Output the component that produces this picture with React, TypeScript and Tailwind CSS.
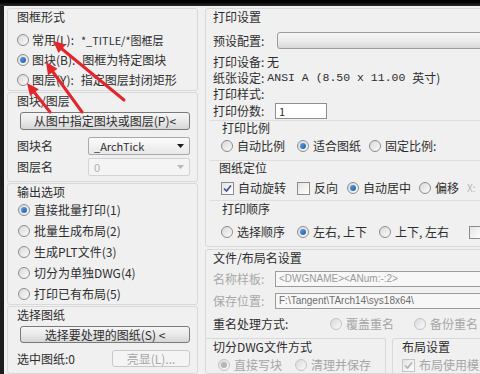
import React from 'react';

function Radio({ checked = false, disabled = false }: { checked?: boolean; disabled?: boolean }) {
  return (
    <span
      className={`w-[12px] h-[12px] shrink-0 rounded-full border flex items-center justify-center bg-gradient-to-br from-[#d9d9d9] to-[#fbfbfb] ${
        disabled ? 'border-[#c4c4c4]' : 'border-[#8c8c8c]'
      }`}
    >
      {checked && (
        <span
          className={`w-[6px] h-[6px] rounded-full ${
            disabled ? 'bg-[#b5b5b5]' : 'bg-gradient-to-br from-[#5fa0e6] to-[#1d5ea8]'
          }`}
        />
      )}
    </span>
  );
}

function Check({ checked = false, disabled = false }: { checked?: boolean; disabled?: boolean }) {
  return (
    <span
      className={`w-[13px] h-[13px] shrink-0 border flex items-center justify-center bg-gradient-to-br from-[#e3e3e3] to-[#ffffff] ${
        disabled ? 'border-[#c4c4c4]' : 'border-[#8c8c8c]'
      }`}
    >
      {checked && (
        <svg width="9" height="9" viewBox="0 0 9 9">
          <path
            d="M1 4.5 L3.5 7 L8 1.5"
            fill="none"
            stroke={disabled ? '#b0b0b0' : '#3b4f8f'}
            strokeWidth="1.6"
          />
        </svg>
      )}
    </span>
  );
}

function Option({
  kind = 'radio',
  checked,
  disabled,
  label,
  w,
}: {
  kind?: 'radio' | 'check';
  checked?: boolean;
  disabled?: boolean;
  label: string;
  w?: string;
}) {
  return (
    <div className={`flex items-center gap-[4px] shrink-0 ${w ?? ''}`}>
      {kind === 'radio' ? <Radio checked={checked} disabled={disabled} /> : <Check checked={checked} disabled={disabled} />}
      <span className={`whitespace-nowrap ${disabled ? 'text-[#a6a6a6]' : ''}`}>{label}</span>
    </div>
  );
}

function Caret({ color = '#1a1a1a' }: { color?: string }) {
  return (
    <svg width="7" height="4" viewBox="0 0 7 4" className="shrink-0">
      <path d="M0 0 H7 L3.5 4 Z" fill={color} />
    </svg>
  );
}

function Btn({ children, disabled, className }: { children: React.ReactNode; disabled?: boolean; className?: string }) {
  return (
    <div
      className={`h-[17px] rounded-[3px] border flex items-center justify-center whitespace-nowrap ${
        disabled
          ? 'border-[#c9c9c9] bg-[#f4f4f4] text-[#a8a8a8]'
          : 'border-[#7a7a7a] bg-gradient-to-b from-[#f6f6f6] via-[#e9e9e9] to-[#d6d6d6]'
      } ${className ?? ''}`}
    >
      {children}
    </div>
  );
}

export default function App() {
  return (
    <div className="w-[480px] h-[374px] overflow-hidden relative bg-[#1c1c1c] font-['Noto_Sans_CJK_SC','Noto_Sans',sans-serif] text-[12px] leading-[16px] text-[#2e2e2e]">
      <div className="h-[6px] bg-gradient-to-b from-[#000000] to-[#2b2b2b]" />
      <div className="flex h-[368px] ml-[4px] pl-[3px] pt-[2px] gap-[7px] bg-[#f0f0f0] overflow-hidden">
        {/* 左侧 */}
        <div className="w-[191px] shrink-0 flex flex-col gap-[1px]">
          <div className="h-[86px] border border-[#d9d9d9] rounded-[3px] pl-[9px] flex flex-col">
            <div className="h-[16px]">图框形式</div>
            <div className="mt-[5px] flex flex-col">
              <div className="h-[20px] flex items-center gap-[3px]">
                <Radio />
                <span>常用(L):</span>
                <span className="ml-[4px] text-[11px]">*_TITLE/*图框层</span>
              </div>
              <div className="h-[20px] flex items-center gap-[3px]">
                <Radio checked />
                <span>图块(B):</span>
                <span className="ml-[4px]">图框为特定图块</span>
              </div>
              <div className="h-[20px] flex items-center gap-[3px]">
                <Radio />
                <span>图层(Y):</span>
                <span className="ml-[4px]">指定图层封闭矩形</span>
              </div>
            </div>
          </div>

          <div className="h-[93px] border border-[#d9d9d9] rounded-[3px] flex flex-col">
            <div className="h-[16px] pl-[9px]">图块/图层</div>
            <Btn className="mt-[3px] ml-[12px] w-[170px] h-[18px]">从图中指定图块或图层(P)&lt;</Btn>
            <div className="mt-[7px] h-[18px] flex items-center pl-[9px]">
              <span className="w-[71px]">图块名</span>
              <div className="w-[102px] h-[18px] border border-[#a9a9a9] rounded-[2px] bg-gradient-to-b from-[#fbfbfb] to-[#e8e8e8] flex items-center justify-between pl-[5px] pr-[5px]">
                <span className="text-[11px]">_ArchTick</span>
                <Caret />
              </div>
            </div>
            <div className="mt-[3px] h-[18px] flex items-center pl-[9px]">
              <span className="w-[71px]">图层名</span>
              <div className="w-[102px] h-[18px] border border-[#d3d3d3] rounded-[2px] bg-[#f4f4f4] flex items-center justify-between pl-[5px] pr-[5px] text-[#b0b0b0]">
                <span className="text-[11px]">0</span>
                <Caret color="#b8b8b8" />
              </div>
            </div>
          </div>

          <div className="h-[123px] border border-[#d9d9d9] rounded-[3px] flex flex-col">
            <div className="h-[15px] pl-[9px]">输出选项</div>
            <div className="pl-[10px] flex flex-col">
              <div className="h-[21px] flex items-center"><Option checked label="直接批量打印(1)" /></div>
              <div className="h-[21px] flex items-center"><Option label="批量生成布局(2)" /></div>
              <div className="h-[21px] flex items-center"><Option label="生成PLT文件(3)" /></div>
              <div className="h-[21px] flex items-center"><Option label="切分为单独DWG(4)" /></div>
              <div className="h-[21px] flex items-center"><Option label="打印已有布局(5)" /></div>
            </div>
          </div>

          <div className="h-[70px] border border-[#d9d9d9] rounded-[3px] flex flex-col">
            <div className="h-[15px] pl-[9px]">选择图纸</div>
            <Btn className="mt-[4px] ml-[12px] w-[170px]">选择要处理的图纸(S) &lt;</Btn>
            <div className="mt-[7px] h-[17px] flex items-center pl-[9px]">
              <span className="w-[95px]">选中图纸:0</span>
              <Btn disabled className="w-[78px]">亮显(L)...</Btn>
            </div>
          </div>
        </div>

        {/* 右侧 */}
        <div className="w-[300px] shrink-0 flex flex-col gap-[2px]">
          <div className="h-[239px] border border-[#d9d9d9] rounded-[3px] flex flex-col">
            <div className="h-[16px] pl-[7px]">打印设置</div>
            <div className="mt-[7px] h-[17px] flex items-center pl-[7px]">
              <span className="w-[64px]">预设配置:</span>
              <div className="flex-1 h-[17px] border border-[#9c9c9c] rounded-[3px] bg-gradient-to-b from-[#f7f7f7] via-[#ececec] to-[#d9d9d9]" />
            </div>
            <div className="mt-[5px] h-[16px] pl-[7px]">打印设备: 无</div>
            <div className="h-[16px] pl-[7px] whitespace-nowrap flex items-center">
              <span>纸张设定: </span>
              <span className="ml-[3px] font-['Liberation_Mono',monospace] text-[11.5px] whitespace-pre">ANSI A (8.50 x 11.00 </span>
              <span>英寸)</span>
            </div>
            <div className="h-[16px] pl-[7px]">打印样式:</div>
            <div className="mt-[1px] h-[16px] flex items-center pl-[7px]">
              <span className="w-[62px]">打印份数:</span>
              <div className="w-[52px] h-[16px] border border-[#8f8f8f] bg-white text-[11px] leading-[14px] pl-[3px]">1</div>
            </div>

            <div className="mt-[1px] ml-[4px] h-[40px] border-t border-[#dedede] flex flex-col">
              <div className="h-[14px] pl-[12px] leading-[14px]">打印比例</div>
              <div className="mt-[3px] h-[16px] flex items-center pl-[11px]">
                <Option label="自动比例" w="w-[76px]" />
                <Option checked label="适合图纸" w="w-[72px]" />
                <Option label="固定比例:" />
              </div>
            </div>
            <div className="ml-[4px] h-[40px] border-t border-[#dedede] flex flex-col">
              <div className="h-[14px] pl-[9px] leading-[14px]">图纸定位</div>
              <div className="mt-[5px] h-[16px] flex items-center pl-[11px]">
                <Option kind="check" checked label="自动旋转" w="w-[76px]" />
                <Option kind="check" label="反向" w="w-[50px]" />
                <Option checked label="自动居中" w="w-[72px]" />
                <Option label="偏移" w="w-[48px]" />
                <span className="text-[#b5b5b5] text-[10px]">X:</span>
              </div>
            </div>
            <div className="ml-[4px] flex-1 border-t border-[#dedede] flex flex-col">
              <div className="h-[16px] pl-[12px]">打印顺序</div>
              <div className="mt-[7px] h-[16px] flex items-center pl-[11px]">
                <Option label="选择顺序" w="w-[76px]" />
                <Option checked label="左右, 上下" w="w-[82px]" />
                <Option label="上下, 左右" w="w-[90px]" />
                <Check />
              </div>
            </div>
          </div>

          <div className="flex-1 border border-[#d9d9d9] rounded-[3px] flex flex-col">
            <div className="h-[15px] pl-[7px]">文件/布局名设置</div>
            <div className="mt-[6px] h-[16px] flex items-center pl-[7px]">
              <span className="w-[62px] text-[#a8a8a8]">名称样板:</span>
              <div className="flex-1 h-[16px] border border-[#9c9c9c] bg-[#f7f7f7] text-[#9a9a9a] text-[10px] leading-[14px] pl-[3px] font-['Liberation_Sans',sans-serif]">
                &lt;DWGNAME&gt;&lt;ANum:-:2&gt;
              </div>
            </div>
            <div className="mt-[6px] h-[16px] flex items-center pl-[7px]">
              <span className="w-[62px] text-[#a8a8a8]">保存位置:</span>
              <div className="flex-1 h-[16px] border border-[#9c9c9c] bg-[#f7f7f7] text-[#6e6e6e] text-[10px] leading-[14px] pl-[3px] font-['Liberation_Sans',sans-serif]">
                F:\Tangent\TArch14\sys18x64\
              </div>
            </div>
            <div className="mt-[7px] h-[16px] flex items-center pl-[7px]">
              <span className="w-[117px]">重名处理方式:</span>
              <Option disabled label="覆盖重名" w="w-[84px]" />
              <Option disabled label="备份重名" />
            </div>
            <div className="mt-[6px] flex gap-[6px] flex-1">
              <div className="w-[180px] shrink-0 border-t border-r border-[#d9d9d9] rounded-tr-[3px] flex flex-col">
                <div className="h-[16px] pl-[7px]">切分DWG文件方式</div>
                <div className="mt-[2px] h-[16px] flex items-center pl-[12px]">
                  <Option disabled checked label="直接写块" w="w-[77px]" />
                  <Option disabled label="清理并保存" />
                </div>
              </div>
              <div className="flex-1 border-t border-l border-[#d9d9d9] rounded-tl-[3px] flex flex-col">
                <div className="h-[16px] pl-[9px]">布局设置</div>
                <div className="mt-[2px] h-[16px] flex items-center pl-[9px]">
                  <Option kind="check" disabled checked label="布局使用模型空" />
                </div>
              </div>
            </div>
          </div>
        </div>
      </div>

      {/* 红色箭头标注 */}
      <svg className="absolute left-0 top-0 pointer-events-none" width="480" height="374">
        <g stroke="#e3262b" strokeWidth="3" strokeLinecap="round">
          <line x1="124" y1="100" x2="62" y2="49" />
          <line x1="82" y1="112" x2="53" y2="72" />
          <line x1="50" y1="112" x2="34" y2="92" />
        </g>
        <g fill="#e3262b">
          <polygon points="53,41 66,44.5 58.5,53" />
          <polygon points="46,62 57.5,68.8 48,75.5" />
          <polygon points="27,83 38.8,89.2 30,96" />
        </g>
      </svg>
    </div>
  );
}
